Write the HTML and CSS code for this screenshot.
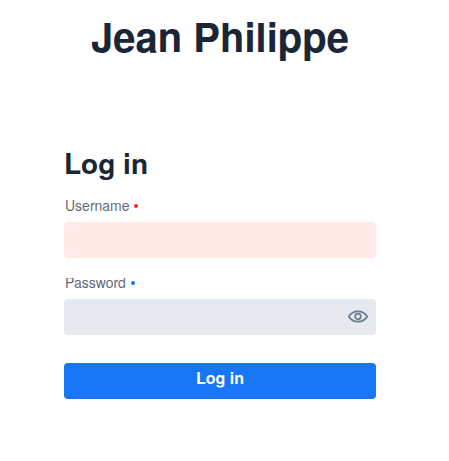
FILE: index.html
```html
<!DOCTYPE html>
<html lang="en">
<head>
<meta charset="utf-8">
<title>Log in</title>
<link rel="stylesheet" href="styles.css">
</head>
<body>
<main class="page">
  <h1 class="brand">Jean Philippe</h1>
  <form class="login">
    <h2 class="title">Log in</h2>
    <label class="label" for="username">Username <span class="dot dot-error"></span></label>
    <input class="field field-error" id="username" type="text">
    <label class="label label-password" for="password">Password <span class="dot"></span></label>
    <div class="password">
      <input class="field" id="password" type="password">
      <svg class="eye" viewBox="0 0 20 14" fill="none" stroke="currentColor" stroke-width="1.7">
        <path d="M.8 6.500C2.800 3 6.100 1.300 10 1.300S17.200 3 19.200 6.500C17.200 10 13.900 11.700 10 11.700S2.800 10 .8 6.500Z"/>
        <circle cx="10" cy="6.500" r="2.800"/>
      </svg>
    </div>
    <button class="submit" type="button">Log in</button>
  </form>
</main>
</body>
</html>
```
FILE: styles.css
```css
* { box-sizing: border-box; }
body {
  margin: 0;
  background: #fff;
  color: #1a2536;
  font-family: "Nimbus Sans", "TeX Gyre Heros", "Liberation Sans", Arial, sans-serif;
}
.page {
  width: 440px;
  height: 461px;
  padding: 12px 64px 0;
}
.brand {
  margin: 0;
  font-size: 40px;
  line-height: 48px;
  text-align: center;
  white-space: nowrap;
}
.login {
  display: flex;
  flex-direction: column;
  margin-top: 85px;
}
.title {
  margin: 0;
  font-size: 28px;
  line-height: 36px;
}
.label {
  margin: 14px 0 7px 1px;
  font-size: 14px;
  line-height: 20px;
  color: #5f6b7c;
}
.label-password { clip-path: inset(6px 0 0 0); }
.dot {
  display: inline-block;
  width: 4px;
  height: 4px;
  margin-left: 1px;
  border-radius: 50%;
  background: #1877f2;
  vertical-align: 3px;
}
.dot-error { background: #fa2418; }
.field {
  display: block;
  width: 100%;
  height: 36px;
  border: 0;
  border-radius: 4px;
  background: #e6e9ee;
}
.field-error { background: #ffeae8; }
.password {
  display: grid;
  align-items: center;
}
.password > * { grid-area: 1 / 1; }
.eye {
  justify-self: end;
  width: 20px;
  height: 14px;
  margin-right: 8px;
  color: #6b7a8c;
}
.submit {
  height: 36px;
  margin-top: 28px;
  padding: 0 0 7px;
  border: 0;
  border-radius: 4px;
  background: #1877f5;
  color: #fff;
  font: bold 16px/20px "Nimbus Sans", "TeX Gyre Heros", "Liberation Sans", Arial, sans-serif;
}
```
